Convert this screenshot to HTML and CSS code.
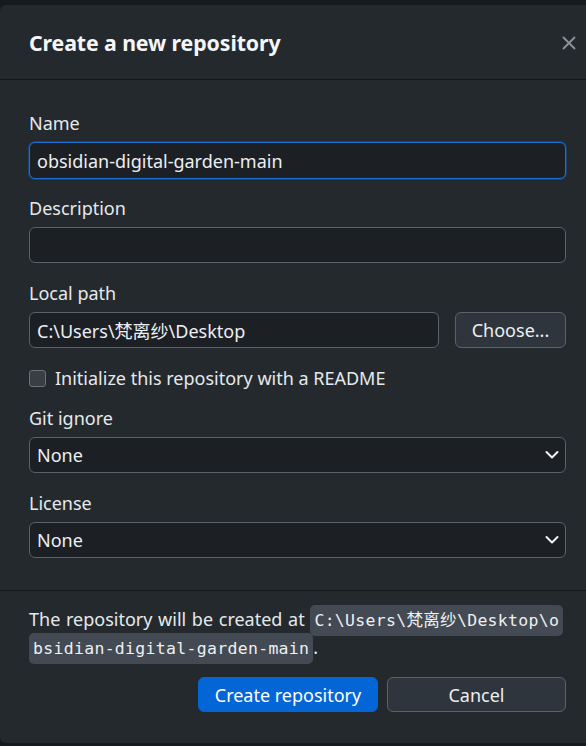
FILE: index.html
```html
<!DOCTYPE html>
<html lang="en">
<head>
<meta charset="utf-8">
<title>Create a new repository</title>
<link rel="stylesheet" href="styles.css">
</head>
<body>
<div class="dialog">
  <header class="dialog-header">
    <h1 class="title">Create a new repository</h1>
    <button class="close" aria-label="Close">
      <svg width="14" height="14" viewBox="0 0 14 14"><path d="M1.5 1.5 L12.5 12.5 M12.5 1.5 L1.5 12.5" stroke="#8b939c" stroke-width="1.8" stroke-linecap="round" fill="none"/></svg>
    </button>
  </header>
  <div class="dialog-body">
    <div class="group">
      <label class="label">Name</label>
      <div class="input focused">obsidian-digital-garden-main</div>
    </div>
    <div class="group">
      <label class="label">Description</label>
      <div class="input"></div>
    </div>
    <div class="group">
      <label class="label">Local path</label>
      <div class="path-row">
        <div class="input path">C:\Users\梵离纱\Desktop</div>
        <button class="btn choose">Choose...</button>
      </div>
    </div>
    <div class="check-row">
      <span class="checkbox"></span>
      <span class="check-label">Initialize this repository with a README</span>
    </div>
    <div class="group">
      <label class="label">Git ignore</label>
      <div class="input select">None
        <svg class="chev" width="14" height="10" viewBox="0 0 14 10"><path d="M1.5 2 L7 7.5 L12.5 2" stroke="#f0f2f4" stroke-width="2" fill="none" stroke-linecap="round" stroke-linejoin="round"/></svg>
      </div>
    </div>
    <div class="group">
      <label class="label">License</label>
      <div class="input select">None
        <svg class="chev" width="14" height="10" viewBox="0 0 14 10"><path d="M1.5 2 L7 7.5 L12.5 2" stroke="#f0f2f4" stroke-width="2" fill="none" stroke-linecap="round" stroke-linejoin="round"/></svg>
      </div>
    </div>
  </div>
  <footer class="dialog-footer">
    <p class="summary">The repository will be created at <code class="code">C:\Users\梵离纱\Desktop\obsidian-digital-garden-main</code>.</p>
    <div class="actions">
      <button class="btn primary">Create repository</button>
      <button class="btn cancel">Cancel</button>
    </div>
  </footer>
</div>
</body>
</html>
```
FILE: styles.css
```css
html, body {
  margin: 0;
  padding: 0;
  background: #16191d;
  height: 746px;
  overflow: hidden;
}
body {
  padding-top: 5px;
  box-sizing: border-box;
  font-family: "Noto Sans", "Open Sans", "Noto Sans CJK SC", sans-serif;
  color: #e6e9ec;
  font-size: 18px;
}
.dialog {
  background: #24292e;
  border-radius: 6px 0 0 6px;
  height: 738px;
  display: flex;
  flex-direction: column;
}
.dialog-header {
  flex-shrink: 0;
  height: 74px;
  border-bottom: 1px solid #141619;
  display: flex;
  align-items: center;
  justify-content: space-between;
  padding: 0 10px 0 29px;
}
.title {
  margin: 0;
  font-size: 21.3px;
  font-weight: 700;
  color: #f4f6f8;
  letter-spacing: -0.1px;
}
.close {
  background: none;
  border: 0;
  padding: 0;
  width: 14px;
  height: 14px;
  display: flex;
  margin-top: 2px;
}
.dialog-body {
  flex-shrink: 0;
  padding: 33px 20px 32px 29px;
  display: flex;
  flex-direction: column;
  gap: 20px;
  border-bottom: 1px solid #141619;
}
.group {
  display: flex;
  flex-direction: column;
  gap: 9px;
}
.label {
  line-height: 20px;
  height: 20px;
  font-size: 18px;
  color: #e6e9ec;
}
.input {
  height: 36px;
  box-sizing: border-box;
  background: #1c2025;
  border: 1px solid #5b6168;
  border-radius: 6px;
  padding: 0 7px;
  display: flex;
  align-items: center;
  font-size: 18px;
  color: #eceff2;
}
.input.focused {
  height: 37px;
  margin-bottom: -1px;
  border-color: #1d6fd6;
  box-shadow: 0 0 0 1px rgba(12, 98, 204, 0.45);
}
.path-row {
  display: flex;
  gap: 16px;
}
.input.path {
  flex: 1;
}
.select {
  justify-content: space-between;
  padding-right: 6px;
}
.btn {
  font-family: inherit;
  font-size: 18px;
  color: #eceff2;
  border-radius: 6px;
  height: 36px;
  box-sizing: border-box;
  cursor: pointer;
  padding: 0;
}
.choose {
  width: 111px;
  background: #2f353c;
  border: 1px solid #5b6168;
}
.check-row {
  display: flex;
  align-items: center;
  gap: 9px;
  height: 20px;
}
.checkbox {
  width: 15px;
  height: 15px;
  border: 1px solid #6b7178;
  background: #393e45;
  border-radius: 3px;
}
.check-label {
  font-size: 18px;
}
.dialog-footer {
  flex: 1;
  padding: 14px 20px 30px 29px;
  display: flex;
  flex-direction: column;
  gap: 16px;
}
.summary {
  margin: 0;
  line-height: 28px;
  font-size: 18px;
  word-spacing: 1px;
  word-break: break-all;
}
.code {
  font-family: "DejaVu Sans Mono", "Noto Sans CJK SC", monospace;
  font-size: 16.5px;
  line-height: 1;
  word-spacing: 0;
  letter-spacing: 0.3px;
  background: #434a53;
  border-radius: 5px;
  padding: 6px 4px;
  color: #eef0f2;
  -webkit-box-decoration-break: clone;
  box-decoration-break: clone;
}
.actions {
  display: flex;
  justify-content: flex-end;
  gap: 9px;
}
.primary {
  width: 180px;
  height: 35px;
  background: #0466d6;
  border: 1px solid #0466d6;
  color: #ffffff;
}
.cancel {
  width: 179px;
  height: 35px;
  background: #2f353c;
  border: 1px solid #5b6168;
}
```
